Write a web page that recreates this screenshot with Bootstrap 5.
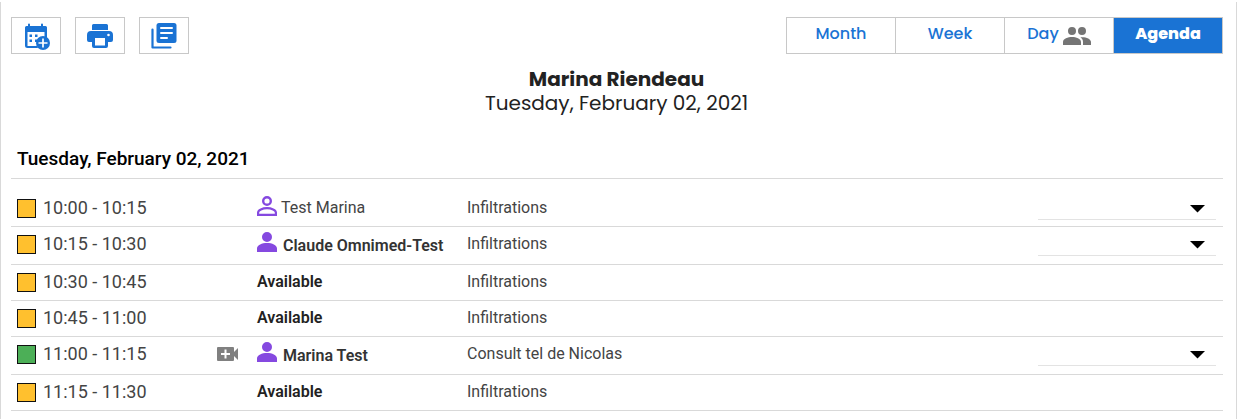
<!DOCTYPE html>
<html lang="en">
<head>
<meta charset="utf-8">
<meta name="viewport" content="width=device-width, initial-scale=1">
<title>Agenda</title>
<link href="https://cdn.jsdelivr.net/npm/bootstrap@5.3.0/dist/css/bootstrap.min.css" rel="stylesheet">
<style>
  :root { --brand: #1a73d4; --line: #d9d9d9; --frame: #c8c8c8; }
  body { font-family: Roboto, "Liberation Sans", sans-serif; color: #222; }
  .panel { margin: 2px 6px 0 0; border: solid var(--line); border-width: 0 1px; padding: 15px 13px 10px 10px; }
  .display-font { font-family: Poppins, Inter, sans-serif; }
  .tool-btn { width: 50px; height: 37px; border: 1px solid var(--frame); border-radius: 0; color: var(--brand); }
  .tool-btn:hover { color: var(--brand); background: #eef5fd; border-color: var(--frame); }
  .tools { gap: 14px; }
  .views .btn { width: 110px; height: 37px; padding: 0 0 4px; border: 1px solid var(--frame); border-radius: 0; color: var(--brand); font-size: 16px; line-height: 24px; font-weight: 500; }
  .views .btn.active { background: var(--brand); color: #fff; font-weight: 800; }
  .views svg { color: #757575; margin: 4px 0 0 2px; vertical-align: -5px; }
  .title { font-size: 20px; line-height: 24px; color: #222; margin: 13px 0 0; padding-right: 1px; }
  .day-heading { font-size: 19px; line-height: 24px; font-weight: 500; color: #000; margin: 32px 0 0; padding: 0 6px 7px; border-bottom: 1px solid var(--line); }
  .agenda { width: 100%; table-layout: fixed; font-size: 16px; line-height: 20px; color: #444; }
  .agenda td { height: 36px; padding: 0; border-bottom: 1px solid var(--line); vertical-align: middle; white-space: nowrap; }
  .agenda tr.booked td { height: 38px; padding-bottom: 2px; }
  .agenda tr.first td { height: 48px; padding-top: 12px; padding-bottom: 0; }
  .agenda tr.first td { height: 47px; }
  .col-time { width: 206px; }
  .col-call { width: 40px; }
  .col-who { width: 210px; }
  .col-status { width: 196px; }
  .time { font-size: 18px; }
  .swatch { width: 19px; height: 19px; border: 1px solid #111; background: #ffc02e; margin: 0 7px 0 6px; }
  .swatch.green { background: #4caf57; }
  .person { color: #8549e0; }
  .call { color: #808080; }
  .strong-name { font-weight: 600; padding: 4px 0 0 6px; color: #333; }
  .agenda .free { font-weight: 600; color: #222; }
  .status { appearance: none; width: 178px; height: 24px; padding: 0 28px 0 0; border: 0; border-bottom: 1px solid #e3e3e3; border-radius: 0; display: block; margin-left: 11px; background: no-repeat right 11px top 9px / 15px 8px url("data:image/svg+xml,%3Csvg xmlns='http://www.w3.org/2000/svg' viewBox='0 0 15 8'%3E%3Cpath d='M0 0h15L7.500 7.500z'/%3E%3C/svg%3E"); }
</style>
</head>
<body>
<svg class="d-none" aria-hidden="true">
  <symbol id="person" viewBox="0 0 20 20"><path fill="currentColor" d="M10 0a5 5 0 1 1 0 10 5 5 0 0 1 0-10zM0 20v-3.500C0 13 5 11 10 11s10 2 10 5.500V20z"/></symbol>
  <symbol id="people" viewBox="0 0 28 18"><path fill="currentColor" d="M9 0a4 4 0 1 1 0 8 4 4 0 0 1 0-8zM19 0a4 4 0 1 1 0 8 4 4 0 0 1 0-8zM0 18v-3c0-3.300 5-5 9-5s9 1.700 9 5v3zM20 18v-3c0-2-.900-3.500-2.600-4.700C22 9.500 28 11.700 28 15v3z"/></symbol>
</svg>
<main class="panel">
  <header class="d-flex justify-content-between">
    <div class="d-flex tools">
      <button type="button" class="btn tool-btn p-0 d-flex align-items-center justify-content-center" aria-label="Add appointment">
        <svg width="28" height="28" viewBox="-2 -1 28 28"><path fill="currentColor" fill-rule="evenodd" d="M2.500 3H4V1.500a1 1 0 0 1 2 0V3h11V1.500a1 1 0 0 1 2 0V3h2.500A1.500 1.500 0 0 1 23 4.500V15a7 7 0 0 0-2.500-.600V9h-17v14h9.500c.300.700.600 1.400 1.100 2H3.500A2.500 2.500 0 0 1 1 22.500V4.500A1.500 1.500 0 0 1 2.500 3zM5.500 11.500H8V14H5.500zM11 11.500h2.500V14H11zM5.500 16.500H8V19H5.500zM11 16.500h2.500V19H11z"/><circle cx="19" cy="20" r="7" fill="currentColor"/><path d="M19 15.500v9M14.500 20h9" stroke="#fff" stroke-width="1.700"/></svg>
      </button>
      <button type="button" class="btn tool-btn p-0 d-flex align-items-center justify-content-center" aria-label="Print">
        <svg width="26" height="24" viewBox="0 0 26 24"><path fill="currentColor" fill-rule="evenodd" d="M6.500 0h13A1.500 1.500 0 0 1 21 1.500V6H5V1.500A1.500 1.500 0 0 1 6.500 0zM4 7h18a4 4 0 0 1 4 4v5a2 2 0 0 1-2 2h-3v4a2 2 0 0 1-2 2H7a2 2 0 0 1-2-2v-4H2a2 2 0 0 1-2-2v-5a4 4 0 0 1 4-4zM8 14v7.500h10V14zM21.500 9.700a1.300 1.300 0 1 0 0 2.600 1.300 1.300 0 0 0 0-2.600z"/></svg>
      </button>
      <button type="button" class="btn tool-btn p-0 d-flex align-items-center justify-content-center" aria-label="Notes">
        <svg width="26" height="26" viewBox="0 0 26 26"><path fill="none" stroke="currentColor" stroke-width="2.200" stroke-linecap="round" stroke-linejoin="round" d="M1.500 6.500v18h18"/><rect x="5.500" width="20" height="20" rx="2.500" fill="currentColor"/><path fill="none" stroke="#fff" stroke-width="2" stroke-linecap="round" d="M10 5h11M10 10h11M10 15h6"/></svg>
      </button>
    </div>
    <div class="btn-group views display-font" role="group" aria-label="Calendar view">
      <button type="button" class="btn">Month</button>
      <button type="button" class="btn">Week</button>
      <button type="button" class="btn d-flex justify-content-center align-items-center">Day <svg class="ms-1" width="28" height="18" aria-hidden="true"><use href="#people"/></svg></button>
      <button type="button" class="btn active">Agenda</button>
    </div>
  </header>

  <h1 class="title display-font text-center fw-normal"><span class="d-block fw-bold">Marina Riendeau</span><span class="d-block">Tuesday, February 02, 2021</span></h1>

  <h2 class="day-heading">Tuesday, February 02, 2021</h2>
  <table class="agenda">
    <colgroup><col class="col-time"><col class="col-call"><col class="col-who"><col><col class="col-status"></colgroup>
    <tbody>
      <tr class="booked first">
        <td><div class="d-flex align-items-center"><span class="swatch"></span><span class="time">10:00 - 10:15</span></div></td>
        <td></td>
        <td><div class="d-flex align-items-center"><svg class="person mb-1" width="20" height="20" viewBox="0 0 20 20"><circle cx="10" cy="5" r="3.800" fill="none" stroke="currentColor" stroke-width="2.400"/><path fill="none" stroke="currentColor" stroke-width="2.200" d="M1.100 18.900v-2.400c0-2.500 4.500-4.300 8.900-4.300s8.900 1.800 8.900 4.300v2.400z"/></svg><span class="ps-1">Test Marina</span></div></td>
        <td>Infiltrations</td>
        <td><select class="status" aria-label="Status for Test Marina"><option></option></select></td>
      </tr>
      <tr class="booked">
        <td><div class="d-flex align-items-center"><span class="swatch"></span><span class="time">10:15 - 10:30</span></div></td>
        <td></td>
        <td><div class="d-flex align-items-center"><svg class="person mb-1" width="20" height="20"><use href="#person"/></svg><span class="strong-name">Claude Omnimed-Test</span></div></td>
        <td>Infiltrations</td>
        <td><select class="status" aria-label="Status for Claude Omnimed-Test"><option></option></select></td>
      </tr>
      <tr>
        <td><div class="d-flex align-items-center"><span class="swatch"></span><span class="time">10:30 - 10:45</span></div></td>
        <td></td>
        <td class="free">Available</td>
        <td>Infiltrations</td>
        <td></td>
      </tr>
      <tr>
        <td><div class="d-flex align-items-center"><span class="swatch"></span><span class="time">10:45 - 11:00</span></div></td>
        <td></td>
        <td class="free">Available</td>
        <td>Infiltrations</td>
        <td></td>
      </tr>
      <tr class="booked">
        <td><div class="d-flex align-items-center"><span class="swatch green"></span><span class="time">11:00 - 11:15</span></div></td>
        <td><svg class="call d-block" width="22" height="14" viewBox="0 0 22 14" role="img" aria-label="Video call"><path fill="currentColor" fill-rule="evenodd" d="M1 0h15a1 1 0 0 1 1 1v4l4-4v12l-4-4v4a1 1 0 0 1-1 1H1a1 1 0 0 1-1-1V1a1 1 0 0 1 1-1zM7.500 2.500V6H4v2h3.500v3.500h2V8H13V6H9.500V2.500z"/></svg></td>
        <td><div class="d-flex align-items-center"><svg class="person mb-1" width="20" height="20"><use href="#person"/></svg><span class="strong-name">Marina Test</span></div></td>
        <td>Consult tel de Nicolas</td>
        <td><select class="status" aria-label="Status for Marina Test"><option></option></select></td>
      </tr>
      <tr>
        <td><div class="d-flex align-items-center"><span class="swatch"></span><span class="time">11:15 - 11:30</span></div></td>
        <td></td>
        <td class="free">Available</td>
        <td>Infiltrations</td>
        <td></td>
      </tr>
    </tbody>
  </table>
</main>
<script src="https://cdn.jsdelivr.net/npm/bootstrap@5.3.0/dist/js/bootstrap.bundle.min.js"></script>
</body>
</html>
